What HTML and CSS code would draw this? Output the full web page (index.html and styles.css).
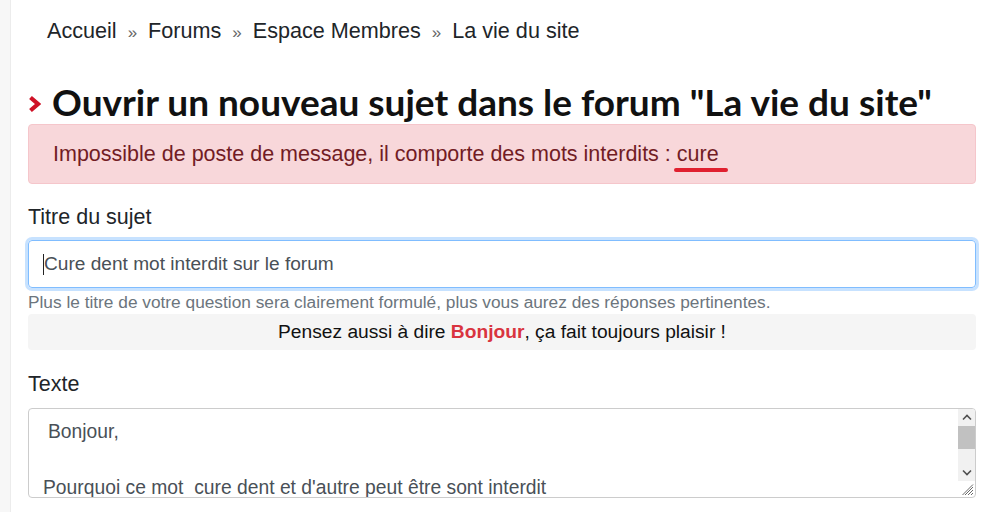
FILE: index.html
```html
<!DOCTYPE html>
<html lang="fr">
<head>
<meta charset="utf-8">
<title>Ouvrir un nouveau sujet</title>
<link rel="stylesheet" href="styles.css">
</head>
<body>
<div class="page">
  <div class="sidebar"></div>
  <main class="main">
    <nav class="breadcrumb">
      <a href="#">Accueil</a><span class="sep">»</span>
      <a href="#">Forums</a><span class="sep">»</span>
      <a href="#">Espace Membres</a><span class="sep">»</span>
      <span class="current">La vie du site</span>
    </nav>
    <h1 class="title"><svg class="chev" width="13" height="18" viewBox="0 0 13 18" aria-hidden="true"><path d="M2.5 2.5 L10 9 L2.5 15.5" fill="none" stroke="#cf1126" stroke-width="4.2" stroke-linejoin="miter" stroke-linecap="butt"/></svg><span>Ouvrir un nouveau sujet dans le forum "La vie du site"</span></h1>
    <div class="alert">Impossible de poste de message, il comporte des mots interdits : <span class="marked">cure</span></div>
    <form class="form">
      <label class="label" for="titre">Titre du sujet</label>
      <div class="input" id="titre"><span class="caret"></span>Cure dent mot interdit sur le forum</div>
      <p class="help">Plus le titre de votre question sera clairement formulé, plus vous aurez des réponses pertinentes.</p>
      <div class="tip">Pensez aussi à dire <strong>Bonjour</strong>, ça fait toujours plaisir !</div>
      <label class="label label-text">Texte</label>
      <div class="textarea">
        <div class="ta-content">
          <div class="line first">Bonjour,</div>
          <div class="line">&nbsp;</div>
          <div class="line">Pourquoi ce mot&nbsp; <span class="marked marked-2">cure</span> dent et d'autre peut être sont interdit</div>
        </div>
        <div class="ta-side">
          <div class="scrollbar">
            <div class="sb-btn"><svg width="10" height="7" viewBox="0 0 10 7"><path d="M1 5.5 L5 1.5 L9 5.5" fill="none" stroke="#505050" stroke-width="1.6"/></svg></div>
            <div class="sb-thumb"></div>
            <div class="sb-track"></div>
            <div class="sb-btn"><svg width="10" height="7" viewBox="0 0 10 7"><path d="M1 1.5 L5 5.5 L9 1.5" fill="none" stroke="#505050" stroke-width="1.6"/></svg></div>
          </div>
          <div class="grip"><svg width="12" height="12" viewBox="0 0 12 12"><path d="M11 3 L3 11 M11 6 L6 11 M11 9 L9 11 M11 0.5 L0.5 11" stroke="#6a6a6a" stroke-width="1"/></svg></div>
        </div>
      </div>
    </form>
  </main>
</div>
</body>
</html>
```

FILE: styles.css
```css
html, body {
  margin: 0;
  padding: 0;
  background: #fff;
}
body {
  font-family: "Liberation Sans", Arial, sans-serif;
  color: #212529;
  overflow: hidden;
}
.page {
  display: flex;
  min-height: 512px;
}
.sidebar {
  width: 10px;
  background: #f7f7f7;
  border-right: 1px solid #ececec;
  flex: none;
}
.main {
  flex: 1;
  min-width: 0;
  padding: 0 5px 0 17px;
}
.breadcrumb {
  padding: 19px 0 0 19px;
  height: 25px;
  font-size: 21.6px;
  line-height: 24px;
  color: #212529;
  white-space: nowrap;
}
.breadcrumb a {
  color: #212529;
  text-decoration: none;
}
.sep {
  color: #666;
  font-size: 17px;
  margin: 0 5px 0 11px;
}
.title {
  margin: 36px 0 0 0;
  font-family: Lato, "Noto Sans", sans-serif;
  font-weight: 700;
  font-size: 37px;
  line-height: 44px;
  height: 44px;
  color: #111;
  display: flex;
  align-items: center;
  white-space: nowrap;
}
.chev {
  flex: none;
  margin: 4px 11px 0 0;
}
.alert {
  margin-top: 0;
  background: #f8d7da;
  border: 1px solid #f5c6cb;
  border-radius: 4px;
  color: #721c24;
  font-size: 21.5px;
  line-height: 25px;
  padding: 17px 24px 16px 24px;
  white-space: nowrap;
}
.marked {
  position: relative;
}
.marked::after {
  content: "";
  position: absolute;
  left: -3px;
  right: -9px;
  bottom: -6px;
  height: 4px;
  border-radius: 2px;
  background: #e0202f;
}
.form {
  margin-top: 20px;
}
.label {
  display: block;
  font-size: 21.5px;
  line-height: 26px;
  color: #212529;
}
.input {
  margin-top: 10px;
  height: 48px;
  box-sizing: border-box;
  border: 1px solid #80bdff;
  border-radius: 4px;
  box-shadow: 0 0 0 3px rgba(0, 123, 255, 0.22);
  font-size: 19.1px;
  color: #495057;
  padding-left: 14px;
  display: flex;
  align-items: center;
  white-space: nowrap;
}
.caret {
  width: 1px;
  height: 21px;
  background: #222;
}
.help {
  margin: 4px 0 0 0;
  font-size: 17.3px;
  line-height: 20px;
  color: #6c757d;
  white-space: nowrap;
}
.tip {
  margin-top: 2px;
  height: 36px;
  background: #f5f5f5;
  border-radius: 4px;
  text-align: center;
  font-size: 19.2px;
  line-height: 36px;
  color: #111;
  white-space: nowrap;
}
.tip strong {
  color: #d9343f;
}
.label-text {
  margin-top: 21px;
}
.textarea {
  margin-top: 11px;
  height: 90px;
  box-sizing: border-box;
  border: 1px solid #ccc;
  border-radius: 4px;
  display: flex;
  overflow: hidden;
}
.ta-content {
  flex: 1;
  min-width: 0;
  font-size: 19.3px;
  line-height: 28px;
  color: #495057;
  padding: 9px 0 0 14px;
  white-space: nowrap;
}
.line.first {
  padding-left: 5px;
}
.marked-2::after {
  left: -5px;
  right: 1px;
  bottom: -10px;
}
.ta-side {
  width: 17px;
  flex: none;
  display: flex;
  flex-direction: column;
}
.scrollbar {
  height: 72px;
  background: #f1f1f1;
  display: flex;
  flex-direction: column;
}
.sb-btn {
  height: 17px;
  display: flex;
  align-items: center;
  justify-content: center;
}
.sb-thumb {
  height: 23px;
  background: #c1c1c1;
}
.sb-track {
  flex: 1;
}
.grip {
  flex: 1;
  display: flex;
  align-items: flex-end;
  justify-content: flex-end;
  padding: 0 1px 1px 0;
}
.grip svg {
  display: block;
}
```
